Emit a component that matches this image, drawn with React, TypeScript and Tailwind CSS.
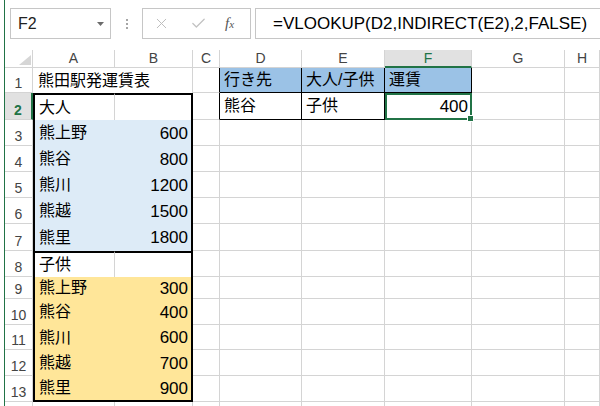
import { Fragment, type ReactNode } from "react";
import clsx from "clsx";
import { X, Check } from "lucide-react";

const adult = [
  ["熊上野", "600"],
  ["熊谷", "800"],
  ["熊川", "1200"],
  ["熊越", "1500"],
  ["熊里", "1800"],
];
const child = [
  ["熊上野", "300"],
  ["熊谷", "400"],
  ["熊川", "600"],
  ["熊越", "700"],
  ["熊里", "900"],
];

const cols = ["A", "B", "C", "D", "E", "F", "G", "H"];

// gridline / black border helpers
const gr = "border-r border-r-[#d4d4d4]";
const gb = "border-b border-b-[#d4d4d4]";
const kr = "border-r border-r-black";
const kb = "border-b border-b-black";

function Jp({ children }: { children: ReactNode }) {
  return <span className="text-[16px] leading-none">{children}</span>;
}

function Num({ children }: { children: ReactNode }) {
  return <span className="text-[17px] leading-none">{children}</span>;
}

function Cell({ cls, right, children }: { cls?: string; right?: boolean; children?: ReactNode }) {
  return (
    <div
      className={clsx(
        "flex items-center whitespace-nowrap pl-[4px] pr-[3px] text-black",
        right && "justify-end",
        cls
      )}
    >
      {children}
    </div>
  );
}

function RowHead({ n, active }: { n?: number; active?: boolean }) {
  return (
    <div
      className={clsx(
        "flex items-end justify-center text-[14px] leading-none",
        active
          ? "bg-[#e1e1e1] font-bold text-[#217346] border-r-2 border-r-[#217346] border-b border-b-[#d4d4d4]"
          : "text-[#444] border-r border-r-[#d4d4d4] border-b border-b-[#d4d4d4]"
      )}
    >
      {n && <span className="pb-[2px]">{n}</span>}
    </div>
  );
}

function Rest() {
  return (
    <>
      {[0, 1, 2, 3, 4, 5].map((i) => (
        <div key={i} className={clsx(gr, gb)} />
      ))}
    </>
  );
}

function FormulaBar() {
  return (
    <div className="h-[50px] shrink-0 flex items-start pt-[8px] pl-[5px]">
      <div className="w-[101px] h-[31px] border border-[#c6c6c6] flex items-center justify-between pl-[7px] pr-[6px]">
        <span className="text-[16px] text-[#222]">F2</span>
        <svg width="7" height="4" viewBox="0 0 7 4">
          <polygon points="0,0 7,0 3.5,4" fill="#6b6b6b" />
        </svg>
      </div>
      <div className="w-[31px] h-[31px] flex flex-col items-center justify-center gap-[2px]">
        <div className="w-[2px] h-[2px] bg-[#a6a6a6]" />
        <div className="w-[2px] h-[2px] bg-[#a6a6a6]" />
        <div className="w-[2px] h-[2px] bg-[#a6a6a6]" />
      </div>
      <div className="w-[109px] h-[31px] border border-[#c6c6c6] flex items-center pl-[10px]">
        <X size={17} strokeWidth={1.4} color="#bdbdbd" />
        <Check size={17} strokeWidth={1.8} color="#c2c2c2" className="ml-[20px]" />
        <span className="ml-[18px] font-['Liberation_Serif',serif] italic text-[15px] text-[#555] leading-none">
          f<span className="text-[11px]">x</span>
        </span>
      </div>
      <div className="ml-[4px] flex-1 h-[31px] border-y border-l border-[#c6c6c6] flex items-center pl-[17px]">
        <span className="text-[17px] text-black whitespace-nowrap">=VLOOKUP(D2,INDIRECT(E2),2,FALSE)</span>
      </div>
    </div>
  );
}

function Sheet() {
  return (
    <div className="grid grid-cols-[28px_82px_78px_27px_82px_83px_87px_93px_1fr] grid-rows-[18px_25px_27px_26px_26px_26px_26px_27px_26px_22px_26px_25px_26px_26px_26px]">
      {/* column headers */}
      <div className={clsx(gr, gb, "flex items-end justify-end pr-[1px] pb-[2px]")}>
        <svg width="12" height="10" viewBox="0 0 12 10">
          <polygon points="12,0 12,10 0,10" fill="#d6d6d6" />
        </svg>
      </div>
      {cols.map((c) =>
        c === "F" ? (
          <div
            key={c}
            className="flex items-center justify-center bg-[#e1e1e1] text-[14px] text-[#217346] border-r border-r-[#d4d4d4] border-b-2 border-b-[#217346]"
          >
            {c}
          </div>
        ) : (
          <div key={c} className={clsx(gr, gb, "flex items-center justify-center text-[14px] text-[#444]")}>
            {c}
          </div>
        )
      )}

      {/* row 1 */}
      <RowHead n={1} />
      <Cell cls={clsx("col-span-2 pl-[5px]", gr)}>
        <Jp>熊田駅発運賃表</Jp>
      </Cell>
      <div className={clsx(kr, gb)} />
      <Cell cls={clsx("bg-[#9bc2e6]", kr, kb)}>
        <Jp>行き先</Jp>
      </Cell>
      <Cell cls={clsx("bg-[#9bc2e6]", kr, kb)}>
        <Jp>大人/子供</Jp>
      </Cell>
      <Cell cls={clsx("bg-[#9bc2e6]", kr, kb)}>
        <Jp>運賃</Jp>
      </Cell>
      <div className={clsx(gr, gb)} />
      <div className={clsx(gr, gb)} />

      {/* row 2 */}
      <RowHead n={2} active />
      <Cell cls={clsx("border-l-2 border-l-black border-t-2 border-t-black pl-[3px]", gr)}>
        <Jp>大人</Jp>
      </Cell>
      <div className="border-t-2 border-t-black border-r-2 border-r-black" />
      <div className={clsx(kr, gb)} />
      <Cell cls={clsx(kr, kb)}>
        <Jp>熊谷</Jp>
      </Cell>
      <Cell cls={clsx(kr, kb)}>
        <Jp>子供</Jp>
      </Cell>
      <div className={clsx("relative z-10 flex items-center justify-end pr-[3px]", kr, kb)}>
        <Num>400</Num>
        <div className="absolute top-0 left-0 -right-[1px] -bottom-[1px] border-2 border-[#217346]" />
        <div className="absolute -right-[3px] -bottom-[3px] w-[7px] h-[7px] bg-[#217346] border border-white" />
      </div>
      <div className={clsx(gr, gb)} />
      <div className={clsx(gr, gb)} />

      {/* rows 3-7 */}
      {adult.map(([name, fare], i) => (
        <Fragment key={"a" + i}>
          <RowHead n={3 + i} />
          <Cell cls="bg-[#ddebf7] border-l-2 border-l-black pl-[3px]">
            <Jp>{name}</Jp>
          </Cell>
          <Cell right cls="bg-[#ddebf7] border-r-2 border-r-black">
            <Num>{fare}</Num>
          </Cell>
          <Rest />
        </Fragment>
      ))}

      {/* row 8 */}
      <RowHead n={8} />
      <Cell cls={clsx("border-l-2 border-l-black border-t-2 border-t-black pl-[3px]", gr)}>
        <Jp>子供</Jp>
      </Cell>
      <div className="border-t-2 border-t-black border-r-2 border-r-black" />
      <Rest />

      {/* rows 9-13 */}
      {child.map(([name, fare], i) => (
        <Fragment key={"c" + i}>
          <RowHead n={9 + i} />
          <Cell
            cls={clsx(
              "bg-[#ffe699] border-l-2 border-l-black pl-[3px]",
              i === 4 && "border-b-2 border-b-black"
            )}
          >
            <Jp>{name}</Jp>
          </Cell>
          <Cell
            right
            cls={clsx("bg-[#ffe699] border-r-2 border-r-black", i === 4 && "border-b-2 border-b-black")}
          >
            <Num>{fare}</Num>
          </Cell>
          <Rest />
        </Fragment>
      ))}

      {/* row 14, only its top edge shows */}
      <RowHead />
      <div className={clsx(gr, gb)} />
      <div className={clsx(gr, gb)} />
      <Rest />
    </div>
  );
}

export default function App() {
  return (
    <div className="w-[600px] h-[406px] overflow-hidden bg-white flex font-['Liberation_Sans','Noto_Sans_CJK_JP',sans-serif]">
      <div className="w-[4px] shrink-0 bg-white" />
      <div className="w-px shrink-0 bg-[#217346]" />
      <div className="flex-1 min-w-0 flex flex-col">
        <FormulaBar />
        <Sheet />
      </div>
    </div>
  );
}
